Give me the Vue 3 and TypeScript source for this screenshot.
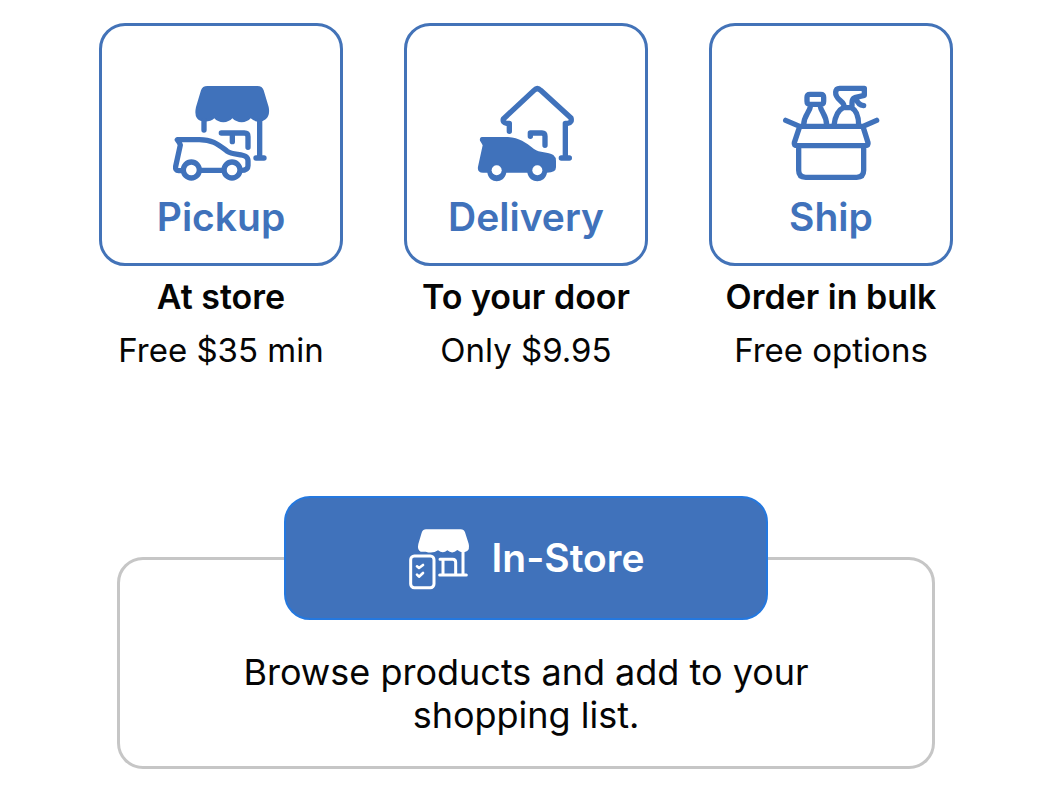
<script setup lang="ts">
type Method = 'pickup' | 'delivery' | 'ship'

interface Option {
  id: Method
  label: string
  title: string
  detail: string
}

const options: Option[] = [
  { id: 'pickup', label: 'Pickup', title: 'At store', detail: 'Free $35 min' },
  { id: 'delivery', label: 'Delivery', title: 'To your door', detail: 'Only $9.95' },
  { id: 'ship', label: 'Ship', title: 'Order in bulk', detail: 'Free options' },
]
</script>

<template>
  <main class="page">
    <section class="options" aria-label="Shopping methods">
      <div v-for="option in options" :key="option.id" class="option">
        <button type="button" class="card">
          <svg v-if="option.id === 'pickup'" class="icon" viewBox="3 0 360 345" aria-hidden="true">
            <path
              class="solid"
              d="M142 33H292Q307 33 311 46L326 96Q331 121 317 133Q309 140 298 140Q282 140 272 130Q262 141 245 142Q228 141 217 130Q207 141 190 142Q173 141 163 130Q153 140 135 140Q119 140 111 130Q103 119 108 96L123 46Q127 33 142 33Z"
            />
            <path class="line" d="M132 136V165M299 137V249M288 249H312M184 174H253Q264 174 264 185V217M217 176V200" />
            <path
              class="line"
              d="M69 287H56Q45 287 47 274L61 210Q58 201 52 194H118C160 194 176 210 202 229C218 240 246 236 258 245Q264 249 264 258V272Q264 286 242 286M119 286H191"
            />
            <circle class="line" cx="94" cy="285" r="24" />
            <circle class="line" cx="216" cy="285" r="24" />
          </svg>

          <svg v-else-if="option.id === 'delivery'" class="icon" viewBox="3 0 360 345" aria-hidden="true">
            <path
              class="line"
              d="M133 169V145H125Q112 143 115 132L207 46Q217 36 227 46L318 129Q322 143 308 145H301V249M289 249H313M196 184V174H231Q240 174 240 184V211"
            />
            <path
              class="solid"
              d="M50 186H122C162 187 179 201 207 222C223 234 250 230 265 240Q273 246 273 258V277Q273 293 246 293C240 327 194 327 187 293H124C117 327 73 327 67 293H54Q36 293 39 275L53 211Q50 204 45 197Q43 187 50 186Z"
            />
            <circle class="hole" cx="95" cy="286" r="15" />
            <circle class="hole" cx="217" cy="286" r="15" />
          </svg>

          <svg v-else class="icon" viewBox="3 0 360 345" aria-hidden="true">
            <path class="line" d="M47 136L89 154H279L320 136M89 155L73 203Q71 212 80 212H287Q296 212 294 203L279 155M86 212V286Q86 307 107 307H260Q281 307 281 286V212" />
            <path class="line" d="M120 58H152Q161 58 161 67V79Q161 88 152 88H120Q111 88 111 79V67Q111 58 120 58ZM122 91C119 115 101 119 101 151M150 91C154 115 170 119 170 151" />
            <path class="line" d="M192 151C195 126 203 106 220 98H244C260 106 266 126 266 151M222 95C224 77 195 76 197 51Q198 40 209 40H283V61L254 68Q246 71 246 83V96M259 73Q264 90 281 92" />
          </svg>
          <span class="label">{{ option.label }}</span>
        </button>
        <h2 class="title">{{ option.title }}</h2>
        <p class="detail">{{ option.detail }}</p>
      </div>
    </section>

    <section class="in-store">
      <button type="button" class="store-button">
        <svg class="store-icon" viewBox="30 30 186 195" aria-hidden="true">
          <path
            class="solid"
            d="M84 40H188Q198 40 201 49L212 83Q216 100 206 106Q192 113 178 102Q163 116 148 103Q135 115 120 103Q104 114 83 107H68Q57 101 61 84L71 50Q75 40 84 40Z"
          />
          <path class="thin" d="M195 105V176M125 177H205M126 130H164Q173 130 173 139V176M135 132V176" />
          <rect class="store-list" x="38" y="120" width="70" height="95" rx="11" />
          <path class="tick" d="M57 151L63 156L75 147M57 176L63 182L75 171" />
        </svg>
        <span>In-Store</span>
      </button>
      <p class="description">Browse products and add to your shopping list.</p>
    </section>
  </main>
</template>

<style>
body {
  margin: 0;
  background: #fff;
}
</style>

<style scoped>
.page {
  box-sizing: border-box;
  padding: 23px 111px 28px 99px;
  color: #050505;
  font-family: Inter, "Liberation Sans", sans-serif;
}

.options {
  display: grid;
  grid-template-columns: repeat(3, minmax(0, 1fr));
  gap: 61px;
}

.option {
  display: flex;
  flex-direction: column;
  text-align: center;
}

button {
  margin: 0;
  font: inherit;
  cursor: pointer;
}

.card {
  display: flex;
  flex-direction: column;
  align-items: center;
  padding: 49px 0 23px;
  border: 3px solid #4373b8;
  border-radius: 26px;
  background: #fff;
  color: #4072bb;
}

.icon {
  width: 120px;
  height: 115px;
}

.solid {
  fill: currentColor;
}

.hole {
  fill: #fff;
}

.line {
  fill: none;
  stroke: currentColor;
  stroke-width: 16;
  stroke-linecap: round;
  stroke-linejoin: round;
}

.label {
  margin-top: 4px;
  font-size: 39px;
  font-weight: 600;
  line-height: 46px;
}

.title,
.detail {
  margin: 9px -24px 0;
  line-height: 44px;
  white-space: nowrap;
}

.title {
  font-size: 34px;
  font-weight: 600;
}

.detail {
  font-size: 33px;
  font-weight: 400;
}

.in-store {
  display: flex;
  flex-direction: column;
  align-items: center;
  margin: 185px 18px 0;
  padding: 0 3px 29px;
  border: 3px solid #c6c6c6;
  border-radius: 26px;
}

.store-button {
  display: flex;
  align-items: center;
  justify-content: center;
  gap: 22px;
  width: 60%;
  min-width: 320px;
  height: 124px;
  margin-top: -64px;
  border: 2px solid #2478df;
  border-radius: 26px;
  background: #4072bb;
  color: #fff;
  font-size: 39px;
  font-weight: 600;
  line-height: 46px;
}

.store-icon {
  width: 62px;
  height: 65px;
}

.thin,
.tick,
.store-list {
  fill: none;
  stroke: currentColor;
  stroke-width: 9;
  stroke-linecap: round;
  stroke-linejoin: round;
}

.tick {
  stroke-width: 8;
}

.description {
  max-width: 600px;
  margin: 31px 0 0;
  font-size: 36px;
  line-height: 43px;
  text-align: center;
}
</style>
